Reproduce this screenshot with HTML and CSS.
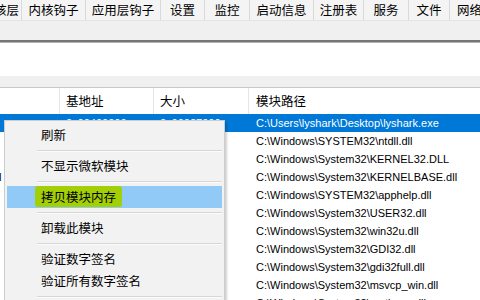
FILE: index.html
```html
<!DOCTYPE html>
<html lang="zh-CN">
<head>
<meta charset="utf-8">
<title>模块</title>
<link rel="stylesheet" href="styles.css">
</head>
<body>
<div class="app">
  <div class="tabs">
    <div class="tab first">内核层</div>
    <div class="tab">内核钩子</div>
    <div class="tab">应用层钩子</div>
    <div class="tab">设置</div>
    <div class="tab">监控</div>
    <div class="tab">启动信息</div>
    <div class="tab">注册表</div>
    <div class="tab">服务</div>
    <div class="tab">文件</div>
    <div class="tab last">网络连接</div>
  </div>
  <div class="toolbar"></div>
  <div class="rule"></div>
  <div class="pane"></div>
  <div class="splitter"></div>
  <div class="list">
    <div class="row head">
      <div class="c c1"></div>
      <div class="c c2">基地址</div>
      <div class="c c3">大小</div>
      <div class="c c4">模块路径</div>
    </div>
    <div class="row sel">
      <div class="c c1"><span class="name">lyshark.exe</span></div>
      <div class="c c2">0x00400000</div>
      <div class="c c3">0x00027000</div>
      <div class="c c4">C:\Users\lyshark\Desktop\lyshark.exe</div>
    </div>
    <div class="row">
      <div class="c c1"><span class="name">ntdll.dll</span></div>
      <div class="c c2">0x77C10000</div>
      <div class="c c3">0x001A3000</div>
      <div class="c c4">C:\Windows\SYSTEM32\ntdll.dll</div>
    </div>
    <div class="row">
      <div class="c c1"><span class="name">KERNEL32.DLL</span></div>
      <div class="c c2">0x76AD0000</div>
      <div class="c c3">0x000F0000</div>
      <div class="c c4">C:\Windows\System32\KERNEL32.DLL</div>
    </div>
    <div class="row">
      <div class="c c1"><span class="name">KERNELBASE.dll</span></div>
      <div class="c c2">0x75F10000</div>
      <div class="c c3">0x00214000</div>
      <div class="c c4">C:\Windows\System32\KERNELBASE.dll</div>
    </div>
    <div class="row">
      <div class="c c1"><span class="name">apphelp.dll</span></div>
      <div class="c c2">0x72E50000</div>
      <div class="c c3">0x0009F000</div>
      <div class="c c4">C:\Windows\SYSTEM32\apphelp.dll</div>
    </div>
    <div class="row">
      <div class="c c1"><span class="name">USER32.dll</span></div>
      <div class="c c2">0x76580000</div>
      <div class="c c3">0x00196000</div>
      <div class="c c4">C:\Windows\System32\USER32.dll</div>
    </div>
    <div class="row">
      <div class="c c1"><span class="name">win32u.dll</span></div>
      <div class="c c2">0x75E80000</div>
      <div class="c c3">0x00018000</div>
      <div class="c c4">C:\Windows\System32\win32u.dll</div>
    </div>
    <div class="row">
      <div class="c c1"><span class="name">GDI32.dll</span></div>
      <div class="c c2">0x77880000</div>
      <div class="c c3">0x00023000</div>
      <div class="c c4">C:\Windows\System32\GDI32.dll</div>
    </div>
    <div class="row">
      <div class="c c1"><span class="name">gdi32full.dll</span></div>
      <div class="c c2">0x76770000</div>
      <div class="c c3">0x000DB000</div>
      <div class="c c4">C:\Windows\System32\gdi32full.dll</div>
    </div>
    <div class="row">
      <div class="c c1"><span class="name">msvcp_win.dll</span></div>
      <div class="c c2">0x76160000</div>
      <div class="c c3">0x0007B000</div>
      <div class="c c4">C:\Windows\System32\msvcp_win.dll</div>
    </div>
    <div class="row">
      <div class="c c1"><span class="name">ucrtbase.dll</span></div>
      <div class="c c2">0x76F20000</div>
      <div class="c c3">0x00120000</div>
      <div class="c c4">C:\Windows\System32\ucrtbase.dll</div>
    </div>
  </div>

  <div class="menu">
    <div class="item">刷新</div>
    <div class="sep"></div>
    <div class="item">不显示微软模块</div>
    <div class="sep"></div>
    <div class="item hot"><span class="mark">拷贝模块内存</span></div>
    <div class="sep"></div>
    <div class="item">卸载此模块</div>
    <div class="sep"></div>
    <div class="item">验证数字签名</div>
    <div class="item">验证所有数字签名</div>
    <div class="sep"></div>
  </div>
</div>
</body>
</html>
```

FILE: styles.css
```css
html, body {
  margin: 0;
  padding: 0;
  width: 480px;
  height: 300px;
  overflow: hidden;
  background: #ffffff;
}

.app {
  position: relative;
  width: 480px;
  height: 300px;
  overflow: hidden;
  font-family: "Noto Sans CJK SC", "Liberation Sans", sans-serif;
  font-size: 12.5px;
  color: #000;
}

/* ---- tab strip ---- */
.tabs {
  display: grid;
  grid-template-columns: 22px 64px 75px 44px 45px 64px 50px 45px 41px 60px;
  height: 20px;
  background: #f4f4f4;
  border-bottom: 1px solid #e4e4e4;
  white-space: nowrap;
  overflow: hidden;
}

.tab {
  box-sizing: border-box;
  line-height: 20px;
  text-align: center;
  border-right: 1px solid #d9d9d9;
  overflow: hidden;
}

.tab.first {
  display: flex;
  justify-content: flex-end;
  padding-right: 2px;
}

.tab.last {
  text-align: left;
  padding-left: 7px;
  border-right: 0;
}

.toolbar {
  height: 19px;
  background: #f0f0f0;
}

.rule {
  height: 1px;
  border-top: 2px solid #767676;
  background: #b4b4b4;
}

.pane {
  height: 33px;
  background: #ffffff;
}

.splitter {
  height: 11px;
  background: #f0f0f0;
  border-bottom: 1px solid #c8c8c8;
}

/* ---- module list ---- */
.list {
  background: #fff;
}

.row {
  display: flex;
  height: 18px;
  line-height: 18px;
  font-family: "Liberation Sans", "Noto Sans CJK SC", sans-serif;
  font-size: 11px;
  white-space: nowrap;
}

.row.head {
  height: 26px;
  line-height: 26px;
  font-family: "Noto Sans CJK SC", sans-serif;
  font-size: 12.5px;
}

.row.head .c {
  border-right: 1px solid #e5e5e5;
}

.row.head .c4 {
  border-right: 0;
}

.c {
  flex: none;
  box-sizing: border-box;
  overflow: hidden;
}

.c1 {
  width: 60px;
}

.c1 .name {
  display: inline-block;
  margin-left: -86px;
}

.c2 {
  width: 94px;
  padding-left: 6px;
}

.c3 {
  width: 95px;
  padding-left: 6px;
}

.c4 {
  flex: 1;
  padding-left: 7px;
}

.row.sel {
  background: #0078d7;
  color: #fff;
}

/* ---- context menu ---- */
.menu {
  position: absolute;
  left: 4px;
  top: 120px;
  width: 221px;
  box-sizing: border-box;
  padding: 3px 2px 3px;
  background: #f2f2f2;
  border: 1px solid #cccccc;
  box-shadow: 2px 2px 2px rgba(0, 0, 0, 0.18);
  font-family: "Noto Sans CJK SC", sans-serif;
  font-size: 12.5px;
}

.item {
  height: 22px;
  line-height: 22px;
  padding-left: 34px;
}

.item.hot {
  background: #91c9f7;
}

.mark {
  background: #a3cf06;
  padding: 1px 6px;
  margin-left: -6px;
  border-radius: 3px;
}

.sep {
  height: 9px;
  margin-left: 30px;
  display: flex;
  flex-direction: column;
  justify-content: center;
}

.sep::before {
  content: "";
  display: block;
  height: 1px;
  background: #d7d7d7;
  border-bottom: 1px solid #fbfbfb;
}
```
